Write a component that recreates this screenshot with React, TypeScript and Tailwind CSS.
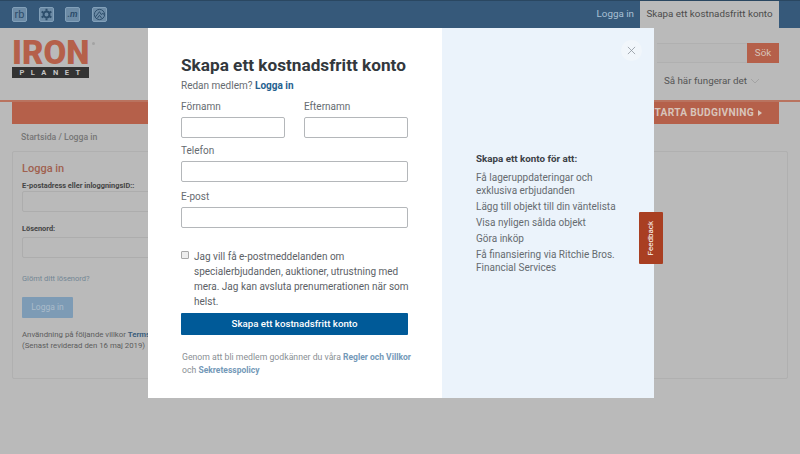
const topIcons = ["rb", "gear", "m", "circle"];

function TopIcon({ name }: { name: string }) {
  return (
    <div className="flex h-[15px] w-[15px] items-center justify-center rounded-[2px] border border-[#82a0b9] bg-[#6c8ba6] text-[#2c4d6b]">
      {name === "rb" && <span className="text-[11px] leading-none">rb</span>}
      {name === "gear" && (
        <svg viewBox="0 0 16 16" className="h-[13px] w-[13px]" fill="none" stroke="currentColor" strokeWidth={2.4}>
          <circle cx="8" cy="8" r="3.6" />
          <path d="M8 1v2.5M8 12.5V15M2 4.5l2.2 1.2M11.8 10.3 14 11.5M14 4.5l-2.2 1.2M4.2 10.3 2 11.5" />
        </svg>
      )}
      {name === "m" && <span className="text-[9px] font-bold italic leading-none">.m</span>}
      {name === "circle" && (
        <svg viewBox="0 0 16 16" className="h-[13px] w-[13px]" fill="none" stroke="currentColor" strokeWidth={1.2}>
          <circle cx="8" cy="8" r="6.3" />
          <path d="M3 11 8 4.5l2 3.5 2.5-1.5L14 9M5 13l3-4 3 4" />
        </svg>
      )}
    </div>
  );
}

function Field({ label, className }: { label: string; className?: string }) {
  return (
    <label className={`block ${className ?? ""}`}>
      <span className="block text-[10px] leading-[14px] text-[#666b70]">{label}</span>
      <input className="mt-[3px] block h-[21px] w-full rounded-[2px] border border-[#b4b7ba] bg-white" />
    </label>
  );
}

export default function App() {
  return (
    <div className="relative h-[454px] w-[800px] overflow-hidden bg-[#bababa] font-['Roboto',sans-serif]">
      {/* Top bar */}
      <div className="flex h-[28px] items-center justify-between border-t border-[#2a4761] bg-[#36597a] pl-[12px] pr-[21px]">
        <div className="flex gap-[11.5px]">
          {topIcons.map((name) => (
            <TopIcon key={name} name={name} />
          ))}
        </div>
        <div className="flex h-full items-center">
          <span className="mr-[6px] whitespace-nowrap text-[9.8px] text-[#a9c0d4]">Logga in</span>
          <span className="flex h-full w-[139px] items-center justify-center whitespace-nowrap bg-[#bababa] text-[9.8px] text-[#4c4c4c]">
            Skapa ett kostnadsfritt konto
          </span>
        </div>
      </div>

      {/* Header */}
      <div className="flex h-[72px] justify-between pl-[12px] pr-[21px]">
        <div className="relative mt-[13px] h-[37px] w-[77px]">
          <div className="h-[24px] whitespace-nowrap text-[33px] font-black leading-[24px] text-[#b5604a]">
            IRON
          </div>
          <span className="absolute left-[80px] top-[1px] h-[3px] w-[3px] rounded-full bg-[#a3a3a3]" />
          <div className="mt-[2px] flex h-[11px] items-center justify-center bg-[#333333] pl-[5px] text-[7.5px] font-bold leading-[11px] tracking-[6.5px] text-[#c4c4c4]">
            PLANET
          </div>
        </div>
        <div className="flex flex-col items-end">
          <div className="mt-[15px] flex">
            <div className="h-[20px] w-[90px] border-y border-[#b0b0b0] bg-[#b8b8b8]" />
            <div className="flex h-[20px] w-[32px] items-center justify-center bg-[#b5604a] text-[9.8px] text-[#d8c4ba]">
              Sök
            </div>
          </div>
          <div className="mt-[11px] flex items-center gap-[3px] pr-[19px] text-[9.8px] text-[#555555]">
            Så här fungerar det
            <svg viewBox="0 0 10 6" className="h-[6px] w-[10px]" fill="none" stroke="#a3a3a3" strokeWidth={1}>
              <path d="M1 1l4 4 4-4" />
            </svg>
          </div>
        </div>
      </div>

      {/* Orange bar */}
      <div className="h-[2px] bg-[#b9735f]" />
      <div className="flex h-[22px] items-center justify-end pr-[21px]">
        <div className="flex h-full w-[767px] items-center justify-end gap-[4px] bg-[#b5604a] pr-[17px] text-[10.2px] font-bold tracking-[0.3px] text-[#d8c4ba]">
          STARTA BUDGIVNING
          <span className="h-0 w-0 border-y-[3px] border-l-[4px] border-y-transparent border-l-[#d8c4ba]" />
        </div>
      </div>

      {/* Login page behind the dialog */}
      <div className="px-[21px] pt-[7px] text-[8.7px] font-medium leading-[12px] text-[#767676]">Startsida / Logga in</div>
      <div className="mx-[12px] mt-[8px] h-[228px] rounded-[2px] border border-[#b0b0b0] px-[9px] pt-[10px]">
        <div className="text-[11px] font-medium leading-[14px] text-[#a0614f]">Logga in</div>
        <div className="mt-[5px] text-[7.4px] font-bold leading-[10px] text-[#444444]">E-postadress eller inloggningsID::</div>
        <div className="h-[21px] w-[400px] rounded-[2px] border border-[#adadad]" />
        <div className="mt-[12px] text-[7.4px] font-bold leading-[10px] text-[#444444]">Lösenord:</div>
        <div className="mt-[3px] h-[21px] w-[400px] rounded-[2px] border border-[#adadad]" />
        <div className="mt-[15px] text-[7.5px] leading-[12px] text-[#728694]">Glömt ditt lösenord?</div>
        <div className="mt-[12px] flex h-[21px] w-[51px] items-center justify-center rounded-[1px] bg-[#7d9bb5] text-[8.5px] text-[#abbccb]">
          Logga in
        </div>
        <div className="mt-[12px] whitespace-nowrap text-[7.8px] leading-[10.5px] text-[#5c5c5c]">
          Användning på följande villkor <b className="text-[#3c5f7d]">Terms &amp; Conditions</b>
          <br />
          (Senast reviderad den 16 maj 2019)
        </div>
      </div>

      {/* Dialog */}
      <div className="absolute left-[148px] top-[28px] flex h-[370px] w-[506px] bg-white">
        <div className="w-[294px] pl-[33px] pt-[25px]">
          <h1 className="whitespace-nowrap text-[17.2px] font-bold leading-[24px] text-[#33383d]">Skapa ett kostnadsfritt konto</h1>
          <p className="mt-[2px] text-[10px] leading-[14px] text-[#666b70]">
            Redan medlem? <b className="font-bold text-[#26618f]">Logga in</b>
          </p>
          <div className="mt-[7px] flex w-[227px] gap-[19px]">
            <Field label="Förnamn" className="w-[104px]" />
            <Field label="Efternamn" className="w-[104px]" />
          </div>
          <Field label="Telefon" className="mt-[6px] w-[227px]" />
          <Field label="E-post" className="mt-[8px] w-[227px]" />
          <div className="mt-[21px] flex w-[232px] gap-[5px]">
            <span className="mt-[2px] h-[8px] w-[8px] shrink-0 rounded-[1px] border border-[#a9a9a9] bg-[#eeeeee]" />
            <p className="text-[10px] leading-[15px] text-[#5c6166]">
              Jag vill få e-postmeddelanden om specialerbjudanden, auktioner, utrustning med mera. Jag kan avsluta
              prenumerationen när som helst.
            </p>
          </div>
          <button className="mt-[4px] flex h-[22px] w-[227px] items-center justify-center rounded-[1px] bg-[#005a98] text-[9.7px] font-medium text-white">
            Skapa ett kostnadsfritt konto
          </button>
          <p className="mt-[16px] w-[240px] pl-[1px] text-[8.7px] leading-[13px] text-[#8a8f94]">
            Genom att bli medlem godkänner du våra <b className="text-[8.5px] text-[#7499b8]">Regler och Villkor</b>
            <br />
            och <b className="text-[8.5px] text-[#7499b8]">Sekretesspolicy</b>
          </p>
        </div>
        <div className="relative flex flex-1 flex-col justify-center bg-[#ebf3fb] pl-[34px] pr-[30px]">
          <div className="absolute right-[12px] top-[12px] flex h-[21px] w-[21px] items-center justify-center rounded-full bg-[#f1f6fb]">
            <svg viewBox="0 0 10 10" className="h-[9px] w-[9px]" fill="none" stroke="#8f979e" strokeWidth={0.9}>
              <path d="M1 1l8 8M9 1l-8 8" />
            </svg>
          </div>
          <h2 className="text-[9.8px] font-bold leading-[14px] text-[#3c4147]">Skapa ett konto för att:</h2>
          <ul className="mt-[5px] flex flex-col gap-[3px] text-[10px] leading-[13px] text-[#666b70]">
            <li>Få lageruppdateringar och exklusiva erbjudanden</li>
            <li>Lägg till objekt till din väntelista</li>
            <li>Visa nyligen sålda objekt</li>
            <li>Göra inköp</li>
            <li>Få finansiering via Ritchie Bros. Financial Services</li>
          </ul>
        </div>
      </div>

      {/* Feedback tab */}
      <div className="absolute left-[639px] top-[212px] flex h-[52px] w-[24px] items-center justify-center rounded-[1px] bg-[#a93f22]">
        <span className="rotate-180 text-[8px] text-white [writing-mode:vertical-rl]">Feedback</span>
      </div>
    </div>
  );
}
